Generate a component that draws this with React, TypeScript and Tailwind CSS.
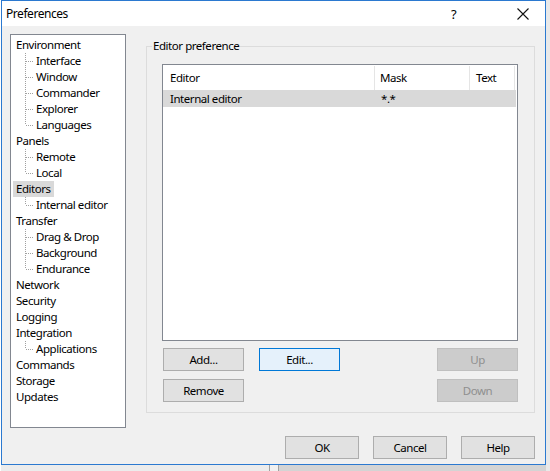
import React from 'react';

type TreeItem = { label: string; children?: string[] };

const tree: TreeItem[] = [
  { label: 'Environment', children: ['Interface', 'Window', 'Commander', 'Explorer', 'Languages'] },
  { label: 'Panels', children: ['Remote', 'Local'] },
  { label: 'Editors', children: ['Internal editor'] },
  { label: 'Transfer', children: ['Drag & Drop', 'Background', 'Endurance'] },
  { label: 'Network' },
  { label: 'Security' },
  { label: 'Logging' },
  { label: 'Integration', children: ['Applications'] },
  { label: 'Commands' },
  { label: 'Storage' },
  { label: 'Updates' },
];

const Connector: React.FC<{ last: boolean }> = ({ last }) => (
  <svg width="16" height="16" className="shrink-0" shapeRendering="crispEdges">
    <line x1="7.5" y1="0" x2="7.5" y2={last ? 8 : 16} stroke="#a0a0a0" strokeDasharray="1 1" />
    <line x1="8" y1="8.5" x2="16" y2="8.5" stroke="#a0a0a0" strokeDasharray="1 1" />
  </svg>
);

const Button: React.FC<{
  label: string;
  w?: string;
  focused?: boolean;
  disabled?: boolean;
}> = ({ label, w = 'w-[81px]', focused, disabled }) => {
  let cls = 'bg-[#e1e1e1] border-[#adadad] text-black';
  if (focused) cls = 'bg-[#e5f1fb] border-[#0078d7] text-black';
  if (disabled) cls = 'bg-[#cccccc] border-[#bfbfbf] text-[#8f8f8f]';
  return (
    <button className={`${w} h-[23px] border ${cls} flex items-center justify-center leading-none`}>
      {label}
    </button>
  );
};

export default function App() {
  return (
    <div className="w-[550px] h-[471px] bg-[#e9e9e9] font-['Noto_Sans',sans-serif] text-[11.5px] tracking-[-0.45px] text-black overflow-hidden flex">
      <div className="w-[1px] h-full bg-white" />
      <div className="flex flex-col">
        <div className="w-[545px] h-[466px] border border-[#2b79d0] bg-[#f0f0f0] flex flex-col">
          {/* title bar */}
          <div className="h-[25px] bg-white flex items-center pl-[4px] pt-[1px] shrink-0">
            <span className="flex-1 text-[12px]">Preferences</span>
            <span className="w-[12px] text-[13px] mr-[54px] leading-none">?</span>
            <svg width="12" height="12" className="mr-[16px]" viewBox="0 0 12 12">
              <path d="M0.5 0.5 L11.5 11.5 M11.5 0.5 L0.5 11.5" stroke="#111" strokeWidth="1.1" />
            </svg>
          </div>

          {/* body */}
          <div className="flex pl-[8px] pt-[8px]">
            {/* tree */}
            <div className="w-[116px] h-[394px] bg-white border border-[#828790] pt-[2px] shrink-0">
              {tree.map((item) => (
                <div key={item.label}>
                  <div className="h-[16px] flex items-center pl-[2px]">
                    <span className={`px-[3px] h-[16px] leading-[16px] ${item.label === 'Editors' ? 'bg-[#d9d9d9]' : ''}`}>
                      {item.label}
                    </span>
                  </div>
                  {item.children?.map((c, i) => (
                    <div key={c} className="h-[16px] flex items-center pl-[7px]">
                      <Connector last={i === item.children!.length - 1} />
                      <span className="ml-[2px] leading-[16px]">{c}</span>
                    </div>
                  ))}
                </div>
              ))}
            </div>

            {/* group box */}
            <div className="ml-[20px] mt-[12px] w-[389px] h-[367px] border border-[#dcdcdc] relative pl-[15px] pt-[17px]">
              <span className="absolute -top-[9px] left-[5px] bg-[#f0f0f0] px-[1px] leading-[16px]">Editor preference</span>

              {/* list view */}
              <div className="w-[356px] h-[277px] bg-white border border-[#828790]">
                <div className="h-[25px] flex pt-[1px]">
                  <div className="w-[212px] border-r border-[#e5e5e5] pl-[7px] flex items-center">Editor</div>
                  <div className="w-[95px] border-r border-[#e5e5e5] pl-[5px] flex items-center">Mask</div>
                  <div className="w-[45px] border-r border-[#e5e5e5] pl-[6px] flex items-center">Text</div>
                </div>
                <div className="h-[17px] w-[353px] bg-[#d9d9d9] flex items-center">
                  <div className="w-[212px] pl-[7px]">Internal editor</div>
                  <div className="pl-[6px]">*.*</div>
                </div>
              </div>

              {/* buttons */}
              <div className="w-[356px] pl-[1px] mt-[7px] flex justify-between">
                <div className="flex gap-[15px]">
                  <Button label="Add..." />
                  <Button label="Edit..." focused />
                </div>
                <Button label="Up" disabled />
              </div>
              <div className="w-[356px] pl-[1px] mt-[8px] flex justify-between">
                <Button label="Remove" />
                <Button label="Down" disabled />
              </div>
            </div>
          </div>

          {/* bottom buttons */}
          <div className="flex justify-end gap-[14px] pr-[10px] mt-[8px]">
            <Button label="OK" w="w-[74px]" />
            <Button label="Cancel" w="w-[74px]" />
            <Button label="Help" w="w-[74px]" />
          </div>
        </div>
        <div className="flex h-[6px]">
          <div className="w-[268px] bg-[#ececec]" />
          <div className="w-[1px] bg-[#a0a0a0]" />
          <div className="w-[8px] bg-[#f0f0f0]" />
          <div className="w-[1px] bg-[#a0a0a0]" />
          <div className="flex-1 bg-[#d4d4d4]" />
        </div>
      </div>
    </div>
  );
}
